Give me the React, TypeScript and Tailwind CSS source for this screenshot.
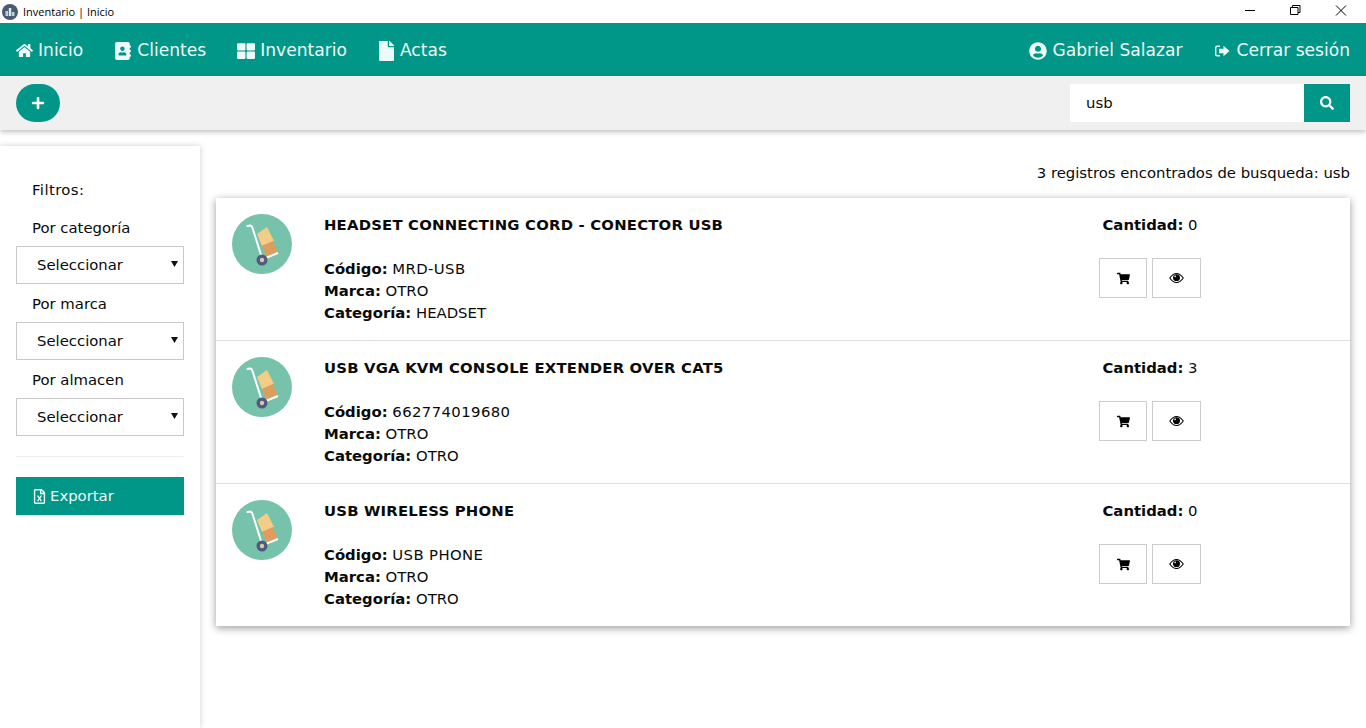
import { FaHome, FaAddressBook, FaThLarge, FaFile, FaUserCircle, FaPlus, FaSearch, FaShoppingCart, FaRegFileExcel } from "react-icons/fa";

const products = [
  { name: "HEADSET CONNECTING CORD - CONECTOR USB", code: "MRD-USB", brand: "OTRO", category: "HEADSET", qty: 0 },
  { name: "USB VGA KVM CONSOLE EXTENDER OVER CAT5", code: "662774019680", brand: "OTRO", category: "OTRO", qty: 3 },
  { name: "USB WIRELESS PHONE", code: "USB PHONE", brand: "OTRO", category: "OTRO", qty: 0 },
];

function TruckIcon() {
  return (
    <svg viewBox="0 0 60 60" className="h-[60px] w-[60px] shrink-0">
      <circle cx="30" cy="30" r="30" fill="#76c2ab" />
      <path d="M25 20 L35 13 L42 27 L30 32 Z" fill="#f3cd85" />
      <path d="M30 32 L41 27 L46 39 L35 44 Z" fill="#df9c5f" />
      <path d="M15.500 12 L18 11.500 C19.500 11.500 20 12.500 20.500 14 L30 44" fill="none" stroke="#fff" strokeWidth="2" strokeLinecap="round" strokeLinejoin="round" />
      <path d="M31 45 L46 39" fill="none" stroke="#fff" strokeWidth="2" />
      <circle cx="30" cy="46" r="5.500" fill="#4f5a80" />
      <circle cx="30" cy="46" r="2.200" fill="#d8c9a8" />
    </svg>
  );
}

function SignOutIcon() {
  return (
    <svg viewBox="0 0 16 16" className="h-[16px] w-[16px]" fill="currentColor">
      <path d="M6 2.500H3A2 2 0 0 0 1 4.500v7a2 2 0 0 0 2 2h3v-1.400H3.400a1 1 0 0 1-1-1V4.900a1 1 0 0 1 1-1H6V2.500z" />
      <path d="M9.500 2.800 15.500 8l-6 5.200V10.300H5V5.700H9.500V2.800z" />
    </svg>
  );
}

function EyeIcon() {
  return (
    <svg viewBox="0 0 16 12" className="h-[12px] w-[15px]">
      <path d="M0.800 6C3 2.800 5.400 1.200 8 1.200S13 2.800 15.200 6C13 9.200 10.600 10.800 8 10.800S3 9.200 0.800 6Z" fill="none" stroke="#000" strokeWidth="1.100" />
      <circle cx="8" cy="5.600" r="3.700" fill="#000" />
      <circle cx="6.500" cy="4.200" r="0.900" fill="#fff" />
    </svg>
  );
}

function NavLink({ icon, label }: { icon: React.ReactNode; label: string }) {
  return (
    <a className="flex items-center gap-[5px]">
      {icon}
      <span>{label}</span>
    </a>
  );
}

function Filter({ label }: { label: string }) {
  return (
    <div className="mb-[10px]">
      <p className="px-4 leading-[20px]">{label}</p>
      <div className="mt-2 flex h-[38px] items-center justify-between border border-[#c8c8c8] pl-5 pr-[5px]">
        <span>Seleccionar</span>
        <svg viewBox="0 0 7 6" className="mb-[3px] h-[6px] w-[7px]"><path d="M0 0h7L3.500 6z" fill="#111" /></svg>
      </div>
    </div>
  );
}

export default function App() {
  return (
    <div className="flex h-[728px] flex-col overflow-hidden bg-white font-['DejaVu_Sans',Verdana,sans-serif] text-[14.850px] text-[#0a0a0a]">
      {/* barra de la ventana */}
      <div className="flex h-[23px] items-center justify-between bg-white">
        <div className="flex items-center gap-[5px] pl-[2px] font-['Open_Sans',sans-serif] text-[11px] text-black">
          <svg viewBox="0 0 16 16" className="h-[16px] w-[16px]">
            <circle cx="8" cy="8" r="8" fill="#4b5a6e" />
            <rect x="3.500" y="7" width="2.500" height="5" fill="#b8d4d8" />
            <rect x="6.800" y="4" width="2.500" height="8" fill="#dfe8ea" />
            <rect x="10" y="8" width="2.500" height="4" fill="#b8d4d8" />
          </svg>
          <span className="pt-[1px]">Inventario | Inicio</span>
        </div>
        <div className="flex items-center text-black">
          <svg viewBox="0 0 46 23" className="h-[23px] w-[46px]"><path d="M17 10.500h10" stroke="currentColor" fill="none" /></svg>
          <svg viewBox="0 0 46 23" className="h-[23px] w-[46px]"><path d="M16.500 7.500h7.500v7h-7.500zM18.500 7.500v-2h7.500v7h-2" stroke="currentColor" fill="none" /></svg>
          <svg viewBox="0 0 46 23" className="h-[23px] w-[46px]"><path d="M16 5.500l10 10M26 5.500l-10 10" stroke="currentColor" fill="none" /></svg>
        </div>
      </div>

      {/* menu */}
      <nav className="flex h-[53px] items-center justify-between bg-[#009688] px-4 pt-[3px] text-[17.100px] text-[#eefaf8]">
        <div className="flex items-center gap-[31px]">
          <NavLink icon={<FaHome className="h-[17px] w-[17px]" />} label="Inicio" />
          <NavLink icon={<FaAddressBook className="h-[18px] w-[18px]" />} label="Clientes" />
          <NavLink icon={<FaThLarge className="h-[18px] w-[18px]" />} label="Inventario" />
          <NavLink icon={<FaFile className="h-[20px] w-[17px]" />} label="Actas" />
        </div>
        <div className="flex items-center gap-8">
          <NavLink icon={<FaUserCircle className="h-[18px] w-[18px]" />} label="Gabriel Salazar" />
          <a className="flex items-center gap-[6px]">
            <SignOutIcon />
            <span>Cerrar sesión</span>
          </a>
        </div>
      </nav>

      {/* barra de acciones */}
      <div className="relative z-10 flex h-[54px] items-center justify-between bg-[#f0f0f0] px-4 shadow-[0_2px_5px_rgba(0,0,0,0.25)]">
        <button className="flex h-[38px] w-[44px] items-center justify-center rounded-full bg-[#009688] text-white">
          <FaPlus className="text-[14px]" />
        </button>
        <div className="flex h-[38px]">
          <div className="flex w-[234px] items-center bg-white pl-4 pt-[1px]">usb</div>
          <button className="flex w-[46px] items-center justify-center bg-[#009688] text-white">
            <FaSearch className="text-[14px]" />
          </button>
        </div>
      </div>

      <div className="flex min-h-0 flex-1 pt-4">
        {/* filtros */}
        <aside className="w-[200px] shrink-0 bg-white px-4 pt-[34px] shadow-[0_0_6px_rgba(0,0,0,0.2)]">
          <p className="mb-[18px] px-4 leading-[20px] tracking-[0.4px]">Filtros:</p>
          <Filter label="Por categoría" />
          <Filter label="Por marca" />
          <Filter label="Por almacen" />
          <hr className="mt-[20px] border-[#eeeeee]" />
          <button className="mt-[20px] flex h-[38px] w-full items-center gap-[3px] bg-[#009688] pl-4 pt-[1px] text-[#eefaf8]">
            <FaRegFileExcel className="text-[15px]" />
            Exportar
          </button>
        </aside>

        {/* resultados */}
        <main className="flex-1 px-4 pt-[17px]">
          <p className="text-right leading-[20px]">3 registros encontrados de busqueda: usb</p>
          <div className="mt-[15px] bg-white shadow-[0_2px_8px_rgba(0,0,0,0.4)]">
            {products.map((p, i) => (
              <div key={p.name} className={i > 0 ? "flex h-[143px] border-t border-[#dddddd] pl-4 pt-4" : "flex h-[142px] pl-4 pt-4"}>
                <TruckIcon />
                <div className="ml-8 flex-1 leading-[22px]">
                  <h3 className="mb-[22px] h-[22px] font-bold tracking-[0.2px]">{p.name}</h3>
                  <p><b>Código:</b> <span className="tracking-[0.4px]">{p.code}</span></p>
                  <p><b>Marca:</b> {p.brand}</p>
                  <p><b>Categoría:</b> {p.category}</p>
                </div>
                <div className="mr-[149px] flex w-[102px] flex-col items-center leading-[22px]">
                  <p className="whitespace-nowrap"><b>Cantidad:</b> {p.qty}</p>
                  <div className="mt-[22px] flex gap-[5px]">
                    <button className="flex h-[40px] w-[48px] items-center justify-center border border-[#cccccc] text-black">
                      <FaShoppingCart className="text-[13px]" />
                    </button>
                    <button className="flex h-[40px] w-[49px] items-center justify-center border border-[#cccccc] text-black">
                      <EyeIcon />
                    </button>
                  </div>
                </div>
              </div>
            ))}
          </div>
        </main>
      </div>
    </div>
  );
}
